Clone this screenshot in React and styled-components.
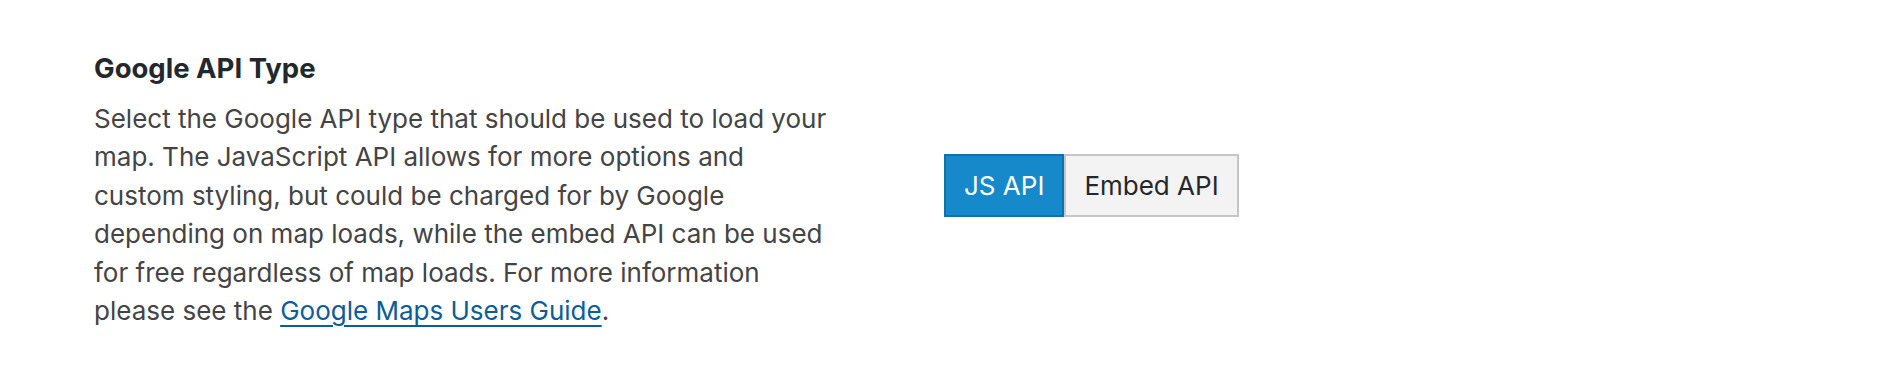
import React from "react";
import styled, { createGlobalStyle } from "styled-components";

const Global = createGlobalStyle`
  html, body { margin: 0; padding: 0; background: #ffffff; }
  body { font-family: Inter, "Noto Sans", "Liberation Sans", sans-serif; }
`;

const Page = styled.div`
  display: flex;
  align-items: flex-start;
  padding: 52px 0 0 94px;
  width: 1886px;
  height: 376px;
  box-sizing: border-box;
  background: #ffffff;
`;

const Info = styled.div`
  width: 760px;
  flex: none;
`;

const Title = styled.h3`
  margin: 0 0 16px;
  font-size: 27.5px;
  line-height: 32px;
  font-weight: 700;
  color: #23282d;
`;

const Description = styled.p`
  margin: 0;
  width: 740px;
  font-size: 26px;
  line-height: 38.4px;
  font-weight: 400;
  color: #444444;
`;

const Link = styled.a`
  color: #0b5d99;
  text-decoration: underline;
  text-decoration-thickness: 2px;
  text-underline-offset: 5px;
`;

const Group = styled.div`
  display: flex;
  margin: 102px 0 0 90px;
`;

const Toggle = styled.button`
  height: 63px;
  padding: 0 ${(p) => p.$pad}px;
  margin: 0;
  font-family: inherit;
  font-size: 26px;
  font-weight: 400;
  border: 2px solid ${(p) => (p.$active ? "#0c73ab" : "#c6c6c6")};
  background: ${(p) => (p.$active ? "#1589c9" : "#f3f3f3")};
  color: ${(p) => (p.$active ? "#ffffff" : "#23282d")};
  border-radius: 0;
  cursor: pointer;
  box-sizing: border-box;
`;

export default function App() {
  return (
    <>
      <Global />
      <Page>
        <Info>
          <Title>Google API Type</Title>
          <Description>
            Select the Google API type that should be used to load your map. The
            JavaScript API allows for more options and custom styling, but could
            be charged for by Google depending on map loads, while the embed API
            can be used for free regardless of map loads. For more information
            please see the <Link href="#">Google Maps Users Guide</Link>.
          </Description>
        </Info>
        <Group>
          <Toggle $active $pad={18}>JS API</Toggle>
          <Toggle $pad={18}>Embed API</Toggle>
        </Group>
      </Page>
    </>
  );
}
